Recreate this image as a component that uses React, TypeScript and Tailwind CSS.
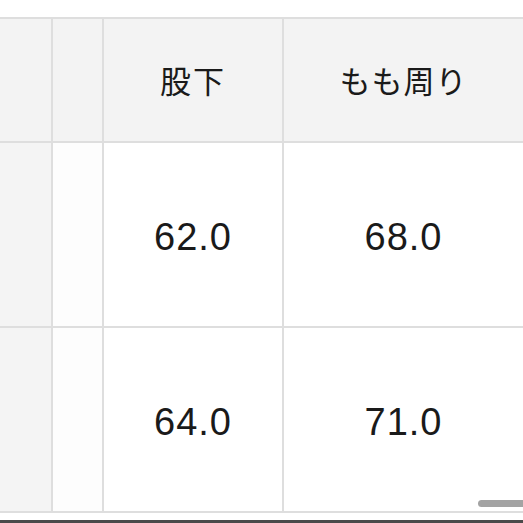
export default function App() {
  const rows = [
    ["62.0", "68.0"],
    ["64.0", "71.0"],
  ];

  return (
    <div
      className="relative h-[523px] w-[523px] overflow-hidden bg-white text-[#1a1a1a]"
      style={{ fontFamily: '"Liberation Sans", Arial, "Noto Sans CJK JP", sans-serif' }}
    >
      <div className="h-[17px]" />
      <div className="grid grid-cols-[51px_49px_178px_239px] grid-rows-[122px_183px_183px] gap-[2px] border-y-2 border-[#dedede] bg-[#dedede]">
        {/* header row */}
        <div className="bg-[#f3f3f3]" />
        <div className="bg-[#f3f3f3]" />
        <div className="flex items-center justify-center bg-[#f3f3f3] pt-[1px] text-[31px] tracking-[2px]" style={{ fontFamily: '"Noto Sans CJK JP", sans-serif' }}>
          股下
        </div>
        <div className="flex items-center justify-center bg-[#f3f3f3] pt-[1px] text-[31px] tracking-[1px]" style={{ fontFamily: '"Noto Sans CJK JP", sans-serif' }}>
          もも周り
        </div>

        {rows.map((r, i) => (
          <div key={i} className="contents">
            <div className="bg-[#f4f4f4]" />
            <div className="bg-[#fdfdfd]" />
            <div className="flex items-center justify-center bg-white pt-[5px] text-[38px] tracking-[1px]">{r[0]}</div>
            <div className="flex items-center justify-center bg-white pt-[5px] text-[38px] tracking-[1px]">{r[1]}</div>
          </div>
        ))}
      </div>

      {/* horizontal scrollbar thumb */}
      <div className="absolute left-[478px] top-[500px] h-[7px] w-[60px] rounded-full bg-[#a3a3a3]" />

      <div className="absolute bottom-0 left-0 h-[3px] w-full bg-[#4a4a4a]" />
    </div>
  );
}
